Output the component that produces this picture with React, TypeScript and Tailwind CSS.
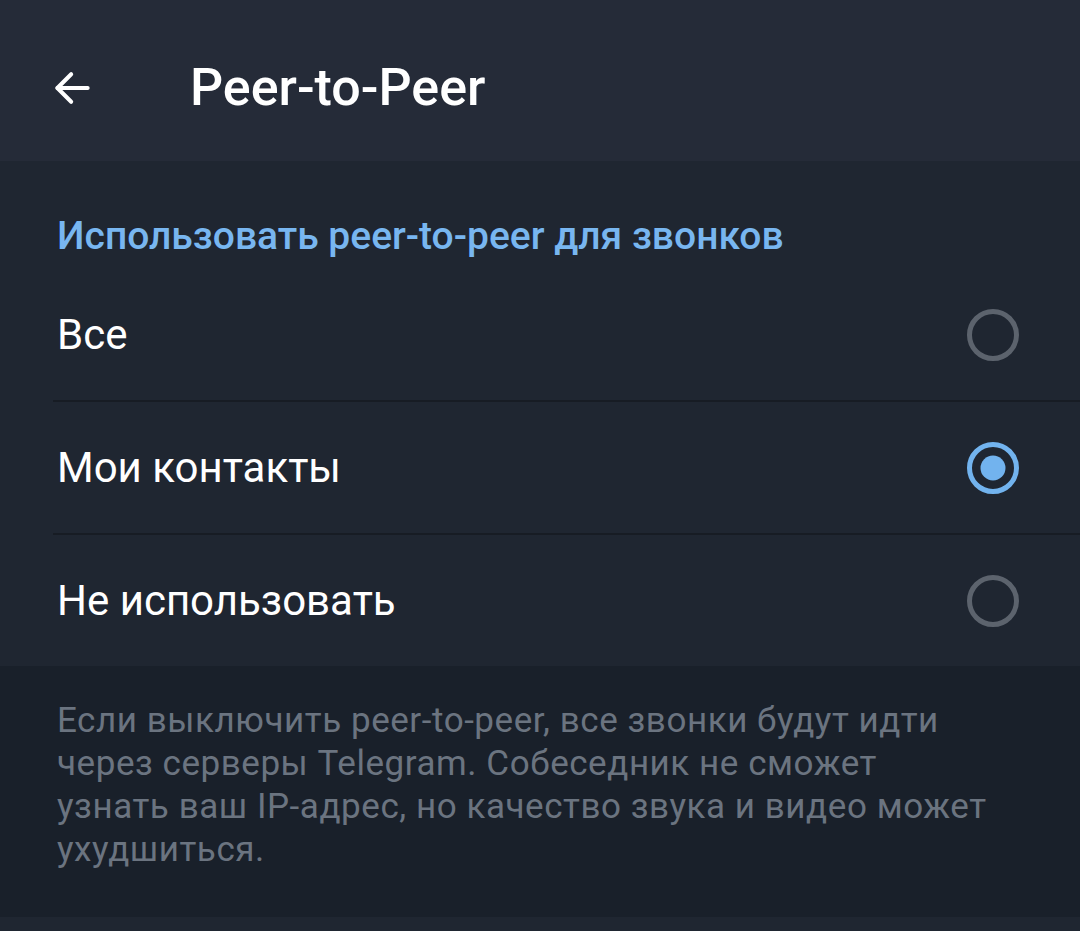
import { ReactNode } from "react";

const options = [
  { label: "Все", checked: false },
  { label: "Мои контакты", checked: true },
  { label: "Не использовать", checked: false },
];

function Radio({ checked }: { checked: boolean }) {
  return (
    <svg width="56" height="56" viewBox="0 0 56 56" className="shrink-0">
      <circle cx="28" cy="28" r="23.5" fill="none" stroke={checked ? "#72b3ee" : "#5c636d"} strokeWidth="5" />
      {checked && <circle cx="28" cy="28" r="12.5" fill="#72b3ee" />}
    </svg>
  );
}

function Row({ children, last }: { children: ReactNode; last?: boolean }) {
  return (
    <div className="flex flex-col">
      <div className="h-[131px] flex items-center justify-between pl-[57px] pr-[59px]">{children}</div>
      {!last && <div className="ml-[53px] h-[2px] bg-[#171c24]" />}
    </div>
  );
}

export default function App() {
  return (
    <div className="w-[1080px] h-[931px] bg-[#1f2631] flex flex-col overflow-hidden" style={{ fontFamily: "Roboto, 'Noto Sans', sans-serif" }}>
      {/* toolbar */}
      <header className="h-[161px] bg-[#252b38] flex items-center shrink-0 pt-[14px]">
        <svg width="44" height="44" viewBox="0 0 24 24" className="ml-[51px]" fill="none" stroke="#ffffff" strokeWidth="2.2" strokeLinecap="round" strokeLinejoin="round">
          <path d="M20 12H3.5" />
          <path d="M11 4.5L3.5 12L11 19.5" />
        </svg>
        <h1 className="ml-[95px] text-[52px] leading-[60px] font-medium text-white">Peer-to-Peer</h1>
      </header>

      <section className="flex flex-col pt-[50px] shrink-0">
        <h2 className="pl-[57px] text-[39px] leading-[50px] font-medium text-[#78b6f0]">Использовать peer-to-peer для звонков</h2>
        <div className="mt-[8px] flex flex-col">
          {options.map((o, i) => (
            <Row key={o.label} last={i === options.length - 1}>
              <span className="text-[42px] text-white">{o.label}</span>
              <Radio checked={o.checked} />
            </Row>
          ))}
        </div>
      </section>

      <footer className="bg-[#19202a] h-[251px] shrink-0 pl-[57px] pr-[30px] pt-[33px]">
        <p className="text-[35px] leading-[43px] tracking-[0.55px] text-[#6b7480]">
          Если выключить peer-to-peer, все звонки будут идти
          <br />
          через серверы Telegram. Собеседник не сможет
          <br />
          узнать ваш IP-адрес, но качество звука и видео может
          <br />
          ухудшиться.
        </p>
      </footer>
    </div>
  );
}
